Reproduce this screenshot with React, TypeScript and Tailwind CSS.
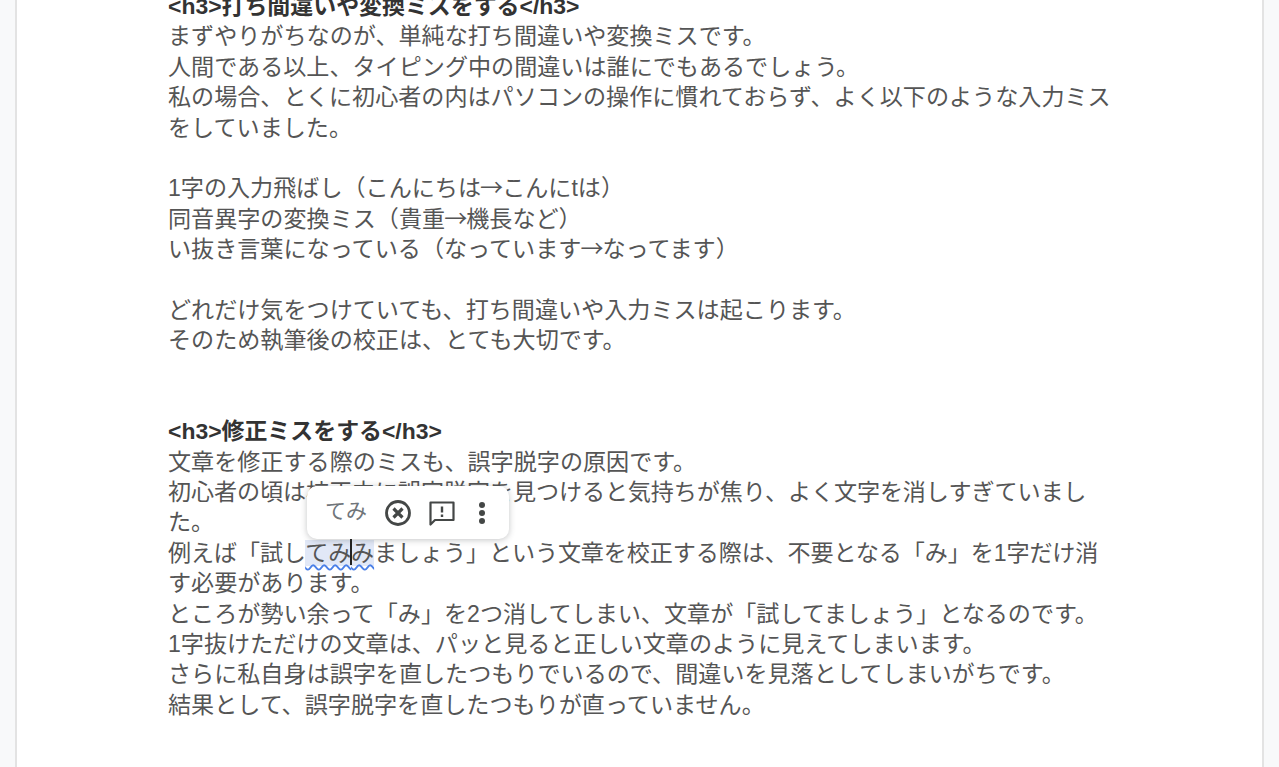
import React from 'react';

const fontStack = 'font-["Liberation_Sans","Noto_Sans_CJK_JP",sans-serif]';

const Line: React.FC<{ children?: React.ReactNode; bold?: boolean; className?: string }> = ({ children, bold, className = '' }) => (
  <div className={`h-[30.38px] leading-[30.38px] whitespace-nowrap ${bold ? 'text-[22.93px] font-bold text-[#333]' : ''} ${className}`}>
    {children}
  </div>
);

const Arrow = () => <span className='-mx-px font-["Noto_Sans_CJK_JP",sans-serif] leading-none'>→</span>;

const SuggestionPopup = () => (
  <div className="absolute left-[290px] top-[495px] z-10 flex h-[53px] w-[202px] items-center rounded-[10px] bg-white pl-[18px] shadow-[0_1px_6px_rgba(60,64,67,0.3)]">
    <span className="-mt-[5px] w-[59px] text-[21px] leading-none text-[#70757a]">てみ</span>
    <svg viewBox="0 0 28 28" className="h-[28px] w-[28px] text-[#444746]" fill="none" stroke="currentColor">
      <circle cx="14" cy="14" r="11.5" strokeWidth="2.8" />
      <path d="M9.5 9.5l9 9M18.5 9.5l-9 9" strokeWidth="3.2" />
    </svg>
    <svg viewBox="0 0 28 28" className="ml-[16px] h-[28px] w-[28px] text-[#444746]" fill="none" stroke="currentColor">
      <path d="M2.5 3.5h23v17.5H7L2.5 25.5z" strokeWidth="2.2" strokeLinejoin="round" />
      <path d="M14 7.5v6M14 15.5v2.5" strokeWidth="2.4" />
    </svg>
    <svg viewBox="0 0 8 28" className="ml-[22px] h-[28px] w-[8px] text-[#444746]" fill="currentColor">
      <circle cx="4" cy="6" r="3" />
      <circle cx="4" cy="14" r="3" />
      <circle cx="4" cy="22" r="3" />
    </svg>
  </div>
);

export default function App() {
  return (
    <div className={`h-[767px] overflow-hidden bg-[#f8f9fa] px-[15px] ${fontStack}`}>
      <div className="h-full overflow-hidden border-x-2 border-[#e3e3e3] bg-white">
        <div className="relative -mt-[9px] pl-[151px] text-[23.1px] text-[#555]">
          <Line bold>{'<h3>打ち間違いや変換ミスをする</h3>'}</Line>
          <Line>まずやりがちなのが、単純な打ち間違いや変換ミスです。</Line>
          <Line>人間である以上、タイピング中の間違いは誰にでもあるでしょう。</Line>
          <Line>私の場合、とくに初心者の内はパソコンの操作に慣れておらず、よく以下のような入力ミス</Line>
          <Line>をしていました。</Line>
          <Line />
          <Line>1字の入力飛ばし（こんにちは<Arrow />こんにtは）</Line>
          <Line>同音異字の変換ミス（貴重<Arrow />機長など）</Line>
          <Line>い抜き言葉になっている（なっています<Arrow />なってます）</Line>
          <Line />
          <Line>どれだけ気をつけていても、打ち間違いや入力ミスは起こります。</Line>
          <Line>そのため執筆後の校正は、とても大切です。</Line>
          <Line />
          <Line />
          <Line bold>{'<h3>修正ミスをする</h3>'}</Line>
          <Line>文章を修正する際のミスも、誤字脱字の原因です。</Line>
          <Line className="tracking-[-0.1px]">初心者の頃は校正中に誤字脱字を見つけると気持ちが焦り、よく文字を消しすぎていまし</Line>
          <Line>た。</Line>
          <Line className="tracking-[-0.12px]">
            例えば「試し
            <span className="relative bg-[#e1e8f7] underline decoration-[#4a80e8] decoration-wavy decoration-[1.5px] underline-offset-[3px]">
              てみ
              <span className="absolute bottom-[1px] left-[45px] h-[26px] w-[2px] bg-[#222]" />
            </span>
            <span className="bg-[#e1e8f7] underline decoration-[#4a80e8] decoration-wavy decoration-[1.5px] underline-offset-[3px]">み</span>
            ましょう」という文章を校正する際は、不要となる「み」を1字だけ消
          </Line>
          <Line>す必要があります。</Line>
          <Line>ところが勢い余って「み」を2つ消してしまい、文章が「試してましょう」となるのです。</Line>
          <Line>1字抜けただけの文章は、パッと見ると正しい文章のように見えてしまいます。</Line>
          <Line>さらに私自身は誤字を直したつもりでいるので、間違いを見落としてしまいがちです。</Line>
          <Line>結果として、誤字脱字を直したつもりが直っていません。</Line>
          <SuggestionPopup />
        </div>
      </div>
    </div>
  );
}
